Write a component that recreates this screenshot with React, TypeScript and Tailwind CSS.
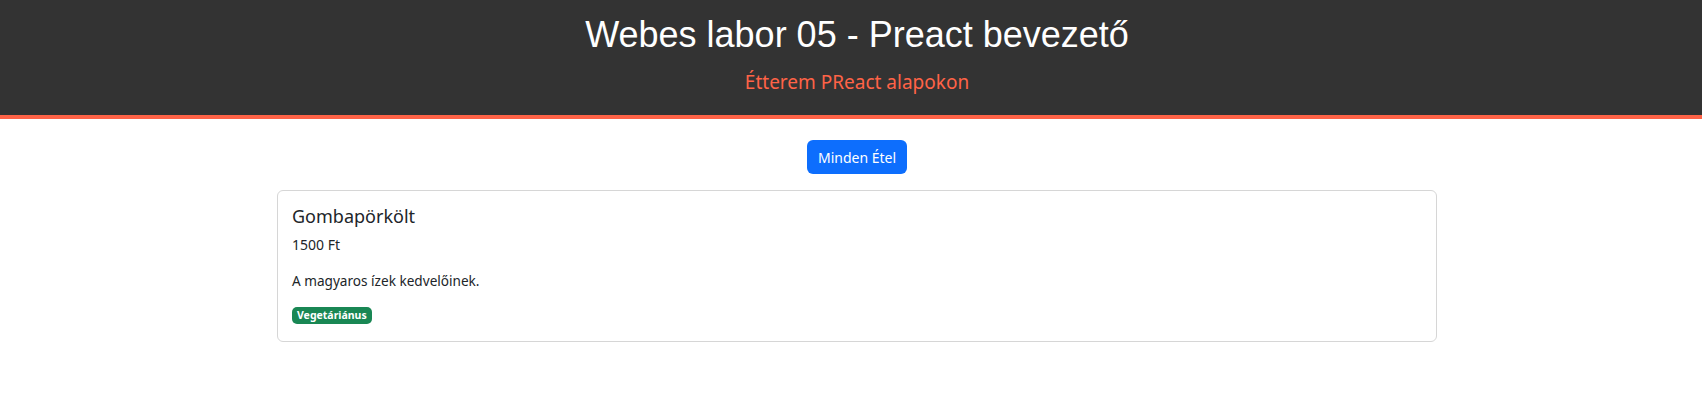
export default function App() {
  const foods = [
    {
      id: 1,
      name: "Gombapörkölt",
      price: 1500,
      description: "A magyaros ízek kedvelőinek.",
      vegetarian: true,
    },
  ];

  return (
    <div className="min-h-screen bg-white font-['Noto_Sans',sans-serif] text-[#212529]">
      <header className="bg-[#333333] border-b-4 border-[#ff6347] pt-[13px] pb-[18px] pl-3 text-center">
        <h1 className="font-['Liberation_Sans',Arial,sans-serif] text-[36px] leading-[43px] text-white">
          Webes labor 05 - Preact bevezető
        </h1>
        <p className="mt-[11px] text-[19px] leading-[30px] text-[#ff6347]">
          Étterem PReact alapokon
        </p>
      </header>

      <main className="pl-3">
        <div className="flex justify-center pt-[21px]">
          <button className="h-[34px] px-[11px] rounded-md bg-[#0d6efd] text-white text-[14px] leading-[21px]">
            Minden Étel
          </button>
        </div>

        <div className="mx-auto mt-4 w-[1160px] space-y-4">
          {foods.map((food) => (
            <div
              key={food.id}
              className="rounded-md border border-[#d6d6d6] bg-white px-[14px] pt-[13px] pb-4"
            >
              <h5 className="text-[18px] leading-6">{food.name}</h5>
              <p className="mt-[6px] text-[14px] leading-[21px]">{food.price} Ft</p>
              <p className="mt-[15px] text-[13.6px] leading-[21px]">
                {food.description}
              </p>
              {food.vegetarian && (
                <span className="mt-4 inline-flex h-[17px] items-center rounded-[5px] bg-[#198754] px-[5px] text-[10.5px] font-bold text-white">
                  Vegetáriánus
                </span>
              )}
            </div>
          ))}
        </div>
      </main>
    </div>
  );
}
